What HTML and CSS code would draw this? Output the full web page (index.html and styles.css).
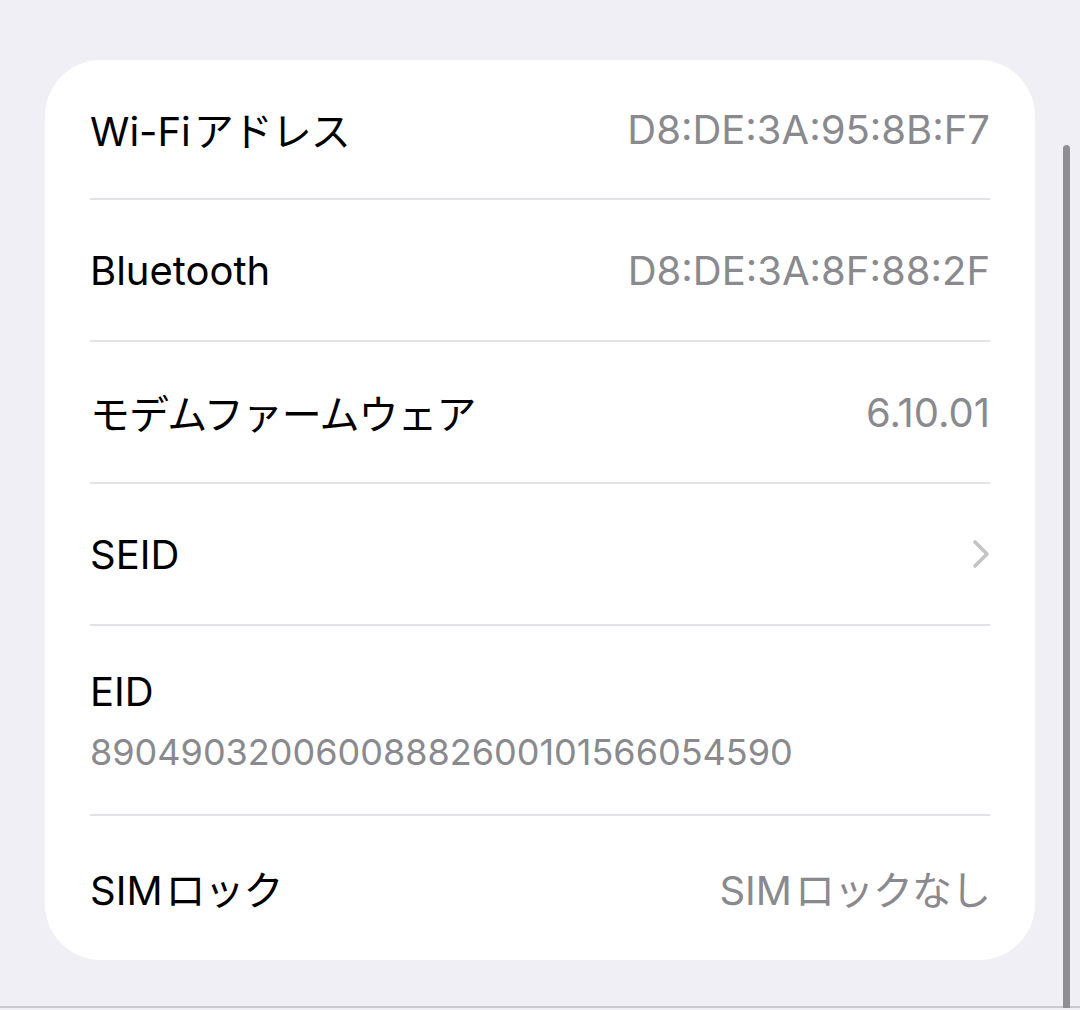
FILE: index.html
```html
<!DOCTYPE html>
<html lang="ja">
<head>
<meta charset="utf-8">
<title>情報</title>
<link rel="stylesheet" href="styles.css">
</head>
<body>
	<div class="screen">
		<div class="card">
			<div class="row">
				<span class="label">Wi-Fi<span class="kana">アドレス</span></span>
				<span class="value">D8:DE:3A:95:8B:F7</span>
			</div>
			<div class="row">
				<span class="label">Bluetooth</span>
				<span class="value">D8:DE:3A:8F:88:2F</span>
			</div>
			<div class="row">
				<span class="label jp">モデムファームウェア</span>
				<span class="value">6.10.01</span>
			</div>
			<div class="row">
				<span class="label">SEID</span>
				<svg class="chevron" width="18" height="30" viewBox="0 0 18 30">
					<path d="M3 3 L15 15 L3 27" fill="none" stroke="#c4c4c7" stroke-width="3.6" stroke-linecap="round" stroke-linejoin="round"/>
				</svg>
			</div>
			<div class="row stacked">
				<span class="label">EID</span>
				<span class="sub">89049032006008882600101566054590</span>
			</div>
			<div class="row last">
				<span class="label">SIM<span class="kana">ロック</span></span>
				<span class="value">SIM<span class="kana">ロックなし</span></span>
			</div>
		</div>
		<div class="scrollbar"></div>
	</div>
</body>
</html>
```

FILE: styles.css
```css
html, body {
	margin: 0;
	padding: 0;
}

body {
	background: #f0eff5;
	font-family: "Inter", "Noto Sans CJK JP", sans-serif;
	-webkit-font-smoothing: antialiased;
}

.screen {
	position: relative;
	height: 1008px;
	padding: 60px 45px 0 45px;
	box-sizing: border-box;
	border-bottom: 2px solid #c9c9ce;
}

.card {
	background: #ffffff;
	border-radius: 56px;
	padding: 0 45px;
}

.row {
	display: flex;
	align-items: center;
	justify-content: space-between;
	height: 140px;
	border-bottom: 2px solid #e3e3e7;
}

.row:first-child {
	height: 138px;
}

.row.stacked {
	flex-direction: column;
	align-items: flex-start;
	justify-content: center;
	height: 188px;
	gap: 14px;
}

.row.last {
	border-bottom: none;
	height: 144px;
}

.label {
	font-size: 40px;
	color: #000000;
}

.label.jp {
	letter-spacing: -1px;
}

.value {
	font-size: 40px;
	color: #8a8a8e;
}

.kana {
	margin-left: 3px;
	letter-spacing: -1px;
}

.sub {
	font-size: 36px;
	color: #8a8a8e;
}

.scrollbar {
	position: absolute;
	left: 1063px;
	top: 145px;
	width: 7px;
	height: 870px;
	background: #8e8e93;
	border-radius: 4px;
}
```
